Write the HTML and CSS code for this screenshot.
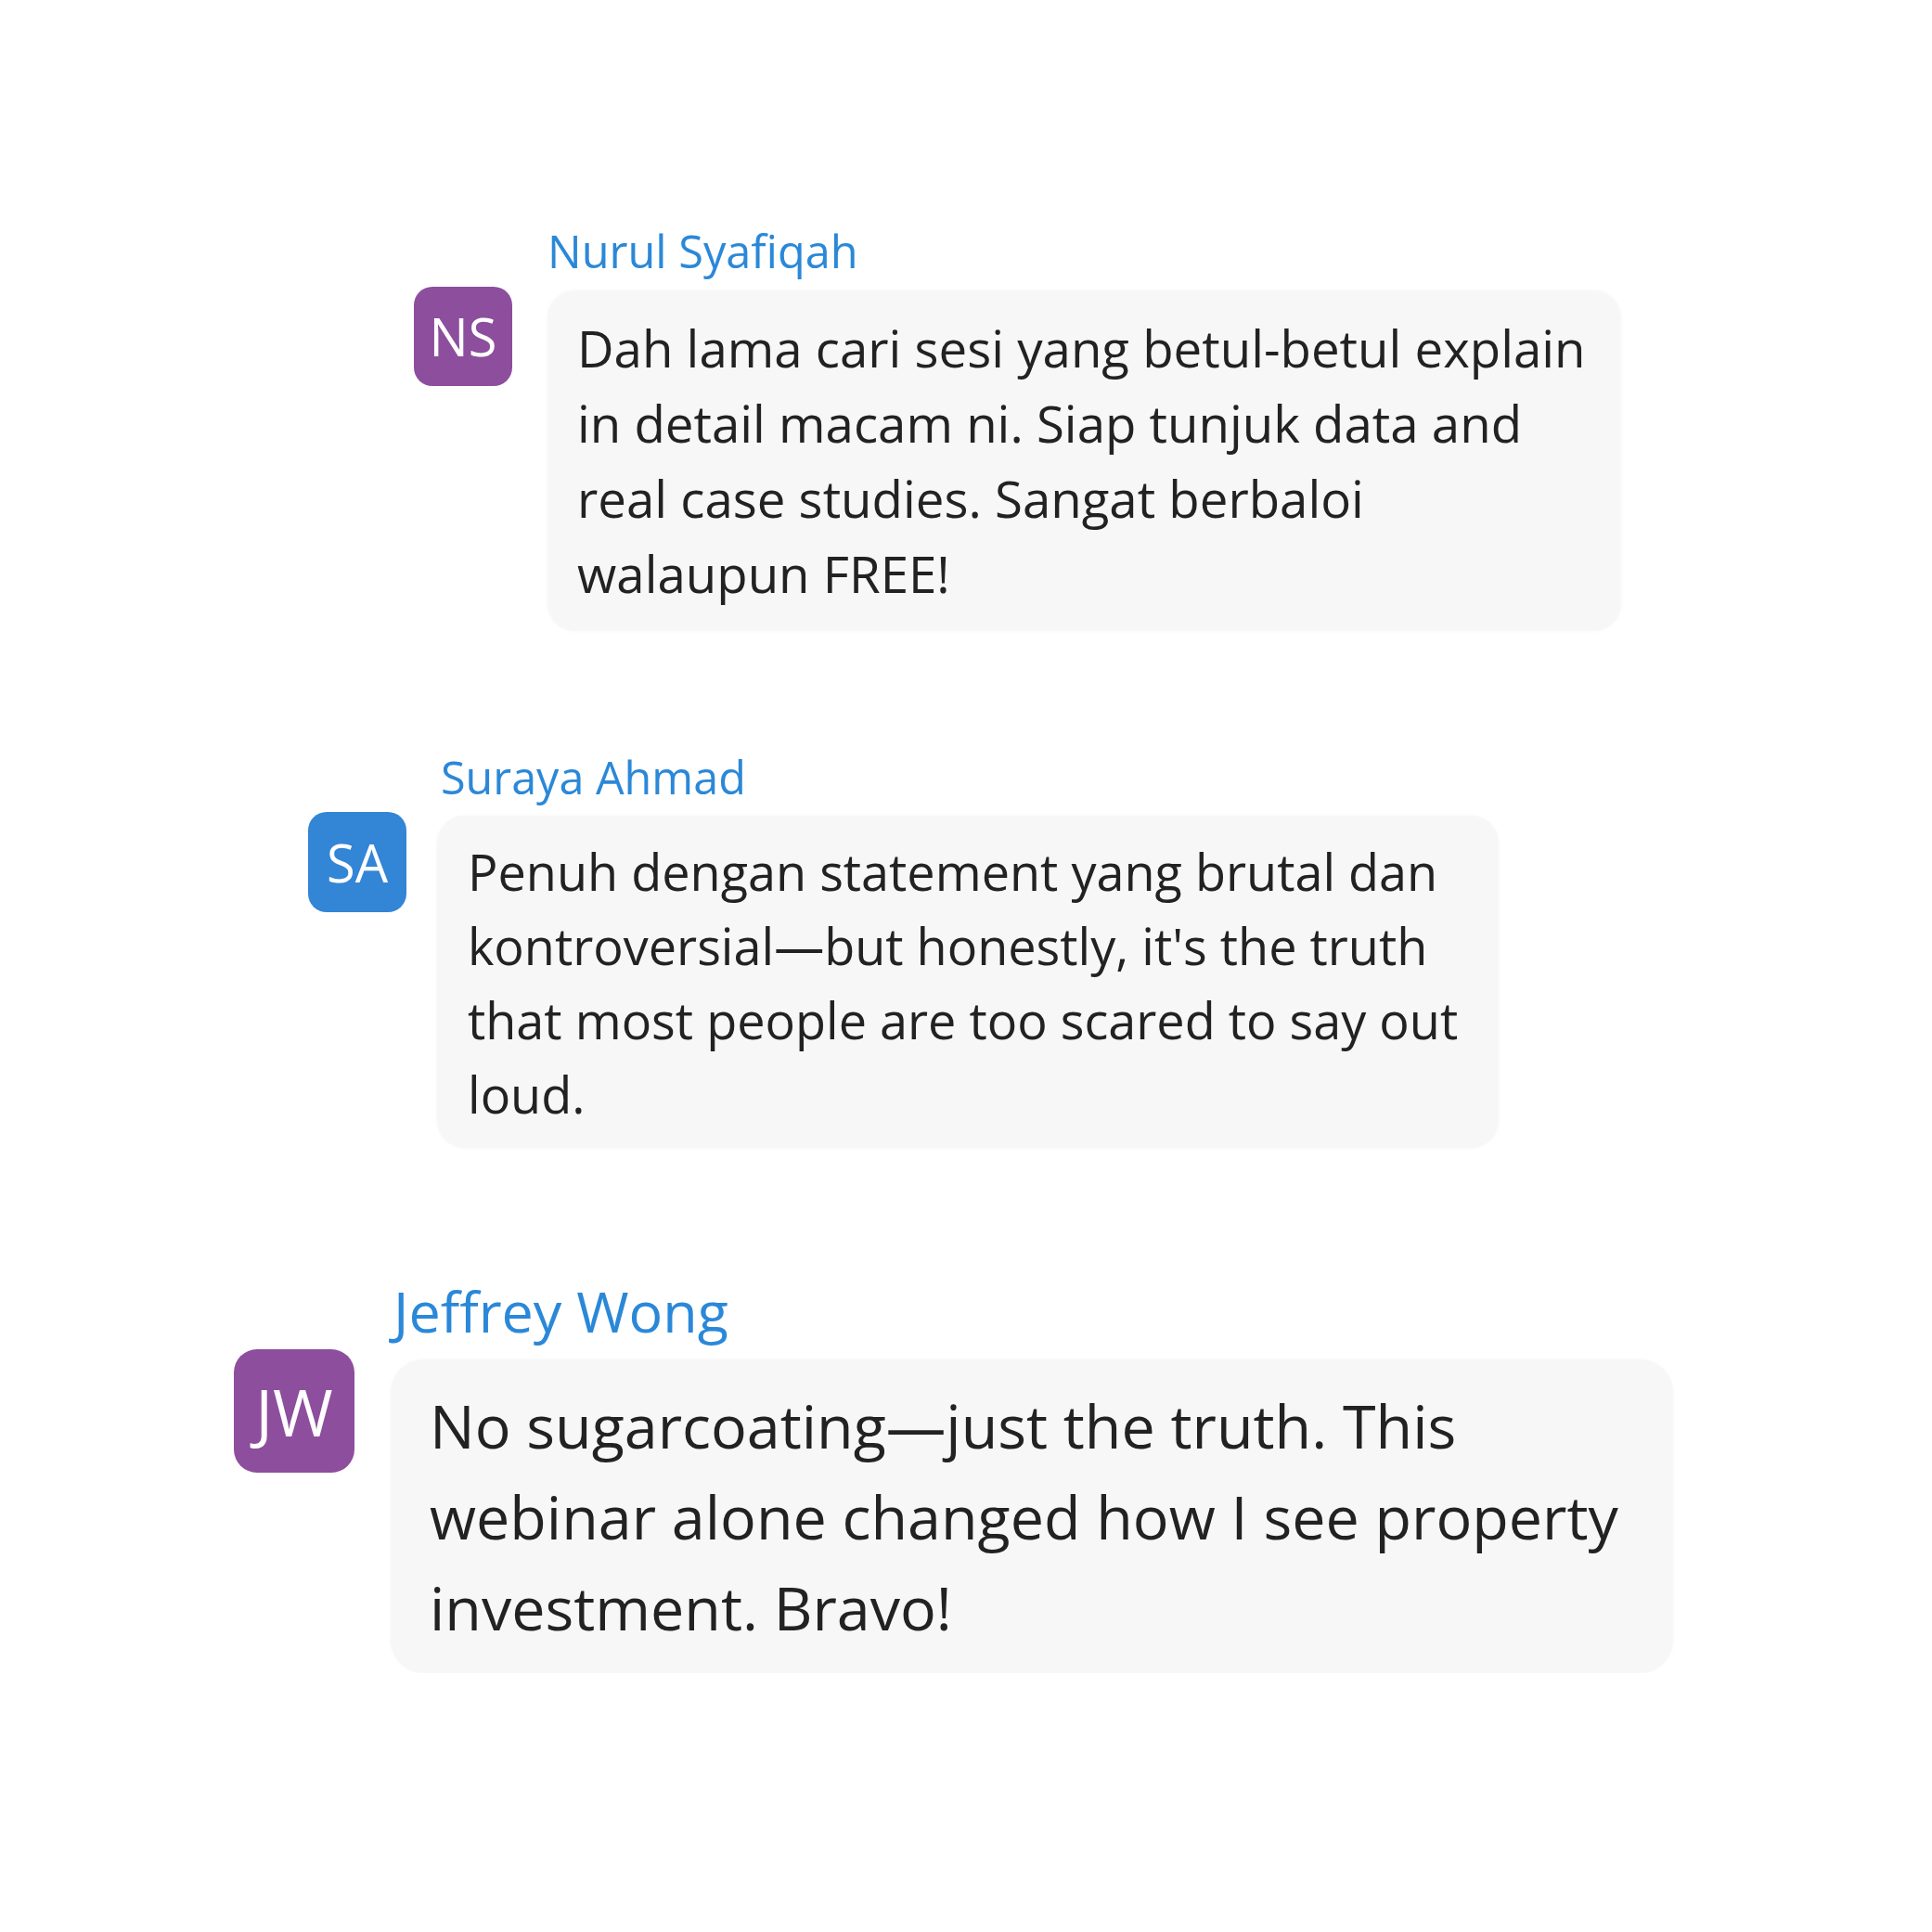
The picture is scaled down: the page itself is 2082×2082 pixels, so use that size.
FILE: index.html
```html
<!DOCTYPE html>
<html lang="ms">
<head>
<meta charset="utf-8">
<title>Testimonials</title>
<link rel="stylesheet" href="styles.css">
</head>
<body>
<main class="thread">
  <article class="msg msg--one">
    <div class="msg__avatar avatar--purple">NS</div>
    <div class="msg__name">Nurul Syafiqah</div>
    <div class="msg__bubble">Dah lama cari sesi yang betul-betul explain in detail macam ni. Siap tunjuk data and real case studies. Sangat berbaloi walaupun FREE!</div>
  </article>
  <article class="msg msg--two">
    <div class="msg__avatar avatar--blue">SA</div>
    <div class="msg__name">Suraya Ahmad</div>
    <div class="msg__bubble">Penuh dengan statement yang brutal dan kontroversial—but honestly, it's the truth that most people are too scared to say out loud.</div>
  </article>
  <article class="msg msg--three">
    <div class="msg__avatar avatar--purple">JW</div>
    <div class="msg__name">Jeffrey Wong</div>
    <div class="msg__bubble">No sugarcoating—just the truth. This webinar alone changed how I see property investment. Bravo!</div>
  </article>
</main>
</body>
</html>
```
FILE: styles.css
```css
html, body {
  margin: 0;
  padding: 0;
  background: #ffffff;
}

body {
  font-family: "Open Sans", "Noto Sans", sans-serif;
  color: #222222;
}

.thread {
  display: flex;
  flex-direction: column;
  align-items: flex-start;
  padding-top: 246px;
}

.msg {
  display: grid;
  grid-template-columns: auto auto;
  grid-template-areas:
    ".      name"
    "avatar bubble";
  align-items: start;
}

.msg__avatar {
  grid-area: avatar;
  display: flex;
  align-items: center;
  justify-content: center;
  color: #ffffff;
  margin-top: -4px;
}

.avatar--purple { background: #8d4e9d; }
.avatar--blue { background: #3385d6; }

.msg__name {
  grid-area: name;
  color: #2b88d8;
  line-height: 1;
  white-space: nowrap;
}

.msg__bubble {
  grid-area: bubble;
  box-sizing: border-box;
  background: #f7f7f7;
  box-shadow: 0 0 4px rgba(0, 0, 0, 0.035);
}

/* message 1 */
.msg--one {
  margin-left: 446px;
  column-gap: 38px;
}
.msg--one .msg__avatar {
  width: 106px;
  height: 107px;
  border-radius: 20px;
  font-size: 56px;
}
.msg--one .msg__name {
  font-size: 48.7px;
  margin-bottom: 18px;
}
.msg--one .msg__bubble {
  width: 1157px;
  border-radius: 30px;
  padding: 22px 28px 21px 32px;
  font-size: 54.6px;
  line-height: 81px;
}

/* message 2 */
.msg--two {
  margin-left: 332px;
  margin-top: 133px;
  column-gap: 33px;
}
.msg--two .msg__avatar {
  width: 106px;
  height: 108px;
  border-radius: 20px;
  font-size: 56px;
}
.msg--two .msg__name {
  font-size: 48.5px;
  margin-bottom: 18px;
  padding-left: 4px;
}
.msg--two .msg__bubble {
  width: 1144px;
  border-radius: 30px;
  padding: 20px 28px 18px 33px;
  font-size: 54px;
  line-height: 80px;
}

/* message 3 */
.msg--three {
  margin-left: 252px;
  margin-top: 145px;
  column-gap: 39px;
}
.msg--three .msg__avatar {
  width: 130px;
  height: 133px;
  border-radius: 25px;
  font-size: 70px;
  margin-top: -11px;
}
.msg--three .msg__name {
  font-size: 61px;
  margin-bottom: 22px;
  padding-left: 3px;
}
.msg--three .msg__bubble {
  width: 1382px;
  border-radius: 36px;
  padding: 22px 30px 22px 42px;
  font-size: 64.6px;
  line-height: 98px;
}
```
